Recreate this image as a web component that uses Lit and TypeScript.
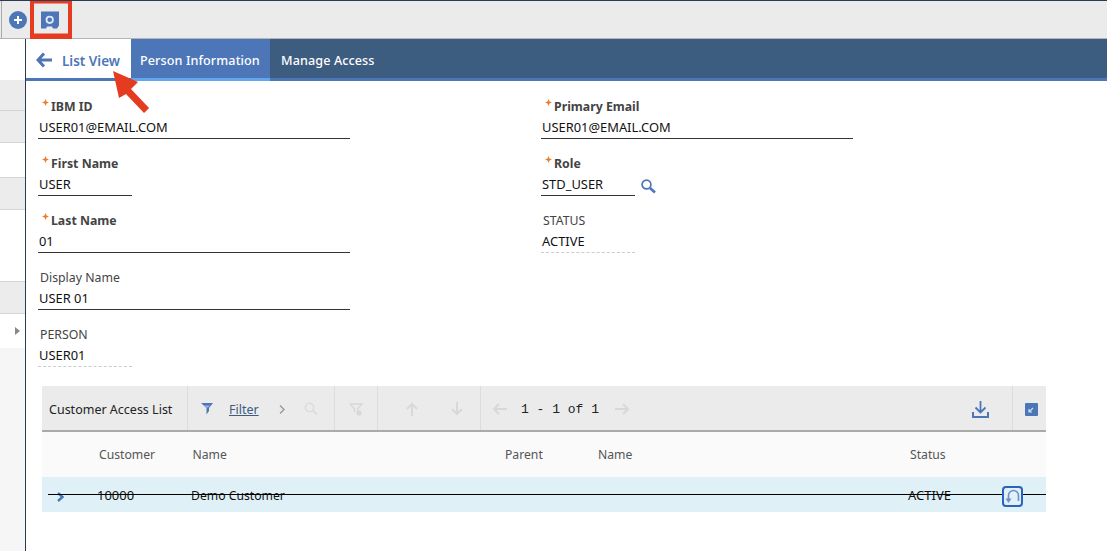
import { LitElement, html, css, svg } from "lit";
import { customElement } from "lit/decorators.js";

const star = svg`<svg class="star" width="7" height="7" viewBox="0 0 7 7"><path d="M3.5 0 L4.5 2.5 L7 3.5 L4.5 4.5 L3.5 7 L2.5 4.5 L0 3.5 L2.5 2.5 Z" fill="#f07a2c"/></svg>`;

@customElement("app-root")
export class AppRoot extends LitElement {
  static styles = css`
    :host { display: block; width: 1107px; height: 551px; position: relative; overflow: hidden; background: #fff;
      font-family: "Noto Sans", "Open Sans", sans-serif; font-size: 13px; color: #111; }
    * { box-sizing: border-box; }
    .top { height: 39px; background: #ebebeb; border-top: 1px solid #2b3a55; border-bottom: 1px solid #b5b5b5; display: flex; align-items: center; }
    .top .sep { width: 1px; height: 37px; background: #a9a9a9; margin-left: 1px; }
    .top .plus { margin-left: 7px; display: block; }
    .top .safe { margin-left: 14px; display: block; }
    .body { display: flex; height: 512px; }
    .rail { width: 26px; flex: none; border-right: 1px solid #2b3a55; display: flex; flex-direction: column; background: #f6f6f6; }
    .rail div { flex: none; }
    .r1 { height: 41px; background: #fff; }
    .g { background: #ececec; border-bottom: 1px solid #d4d4d4; }
    .w { background: #fff; border-bottom: 1px solid #d4d4d4; }
    .h31 { height: 31px; }
    .h32 { height: 32px; }
    .h35 { height: 35px; }
    .h72 { height: 72px; }
    .chev { height: 34px; background: #fff; display: flex; align-items: center; justify-content: flex-end; padding-right: 5px; }
    .chev svg { display: block; }
    .main { flex: 1; display: flex; flex-direction: column; min-width: 0; }
    .tabs { height: 42px; display: flex; background: #3c5c80; border-bottom: 3px solid #4d76b8; color: #fff; font-size: 12.6px; font-weight: 500; letter-spacing: .1px; }
    .tab { display: flex; align-items: center; padding-top: 4px; }
    .tab.list { width: 105px; background: #fff; color: #4d76b8; font-weight: 600; padding-left: 10px; gap: 10px; font-size: 13.5px; letter-spacing: 0; }
    .tab.list svg { margin-top: -2px; }
    .tab.info { width: 139px; background: #4d76b8; padding-left: 9px; box-shadow: 0 3px 0 #62a6ee; }
    .tab.manage { padding-left: 11px; }
    .form { display: grid; grid-template-columns: 503px 312px; padding: 15px 0 0 12px; }
    .col { display: flex; flex-direction: column; }
    .field { height: 57px; display: flex; flex-direction: column; align-items: flex-start; }
    .label { height: 20px; margin-bottom: 1px; font-size: 12.3px; display: flex; align-items: center; color: #444; padding-left: 2px; }
    .label.req { font-weight: 700; padding-left: 4px; }
    .star { margin: 0 2px 7px 0; flex: none; }
    .val { height: 22px; width: 312px; padding-left: 1px; font-size: 12.9px; color: #111; border-bottom: 1px solid #333; line-height: 21px; }
    .val.short { width: 94px; }
    .val.ro { border-bottom: 1px dashed #ccc; }
    .role { display: flex; align-items: flex-start; gap: 6px; }
    .role svg { margin-top: 5px; display: block; }
    .table { width: 1004px; margin: 5px 0 0 16px; position: relative; }
    .bar { height: 46px; background: #ebebeb; border-bottom: 2px solid #aaa; display: flex; align-items: stretch; color: #222; }
    .seg { display: flex; align-items: center; border-right: 1px solid #dcdcdc; flex: none; padding-top: 2px; }
    .seg svg { display: block; flex: none; }
    .s1 { width: 146px; padding-left: 7px; font-size: 12.5px; }
    .s2 { width: 147px; padding-left: 13px; }
    .s2 a { margin-left: 16px; color: #3c5c80; text-decoration: underline; font-size: 12.5px; }
    .s2 .c { margin-left: 20px; }
    .s2 .m { margin-left: 19px; }
    .s3 { width: 43px; justify-content: center; }
    .s4 { width: 103px; padding-left: 27px; gap: 31px; }
    .s5 { flex: 1; padding-left: 12px; font-family: "Liberation Mono", monospace; font-size: 13px; }
    .s5 .txt { margin: 0 16px 0 14px; }
    .s5 .dl { margin-left: auto; margin-right: 23px; }
    .s6 { width: 33px; padding-left: 12px; border-right: none; }
    .head { height: 45px; background: #fafafa; display: flex; align-items: center; font-size: 12.2px; color: #555; }
    .row { height: 35px; background: #dff0f7; display: flex; align-items: center; padding-top: 1px; font-size: 12.2px; color: #111; position: relative; }
    .cell { flex: none; }
    .c-cust { margin-left: 57px; width: 93.5px; }
    .c-name { width: 312.5px; }
    .c-par { width: 93px; }
    .c-name2 { width: 312px; }
    .row .c-id { margin-left: 32px; width: 94px; font-size: 13px; }
    .row .c-dem { width: 717px; }
    .row .c-act { font-size: 13px; }
    .expand { margin-left: 15px; flex: none; margin-top: 4px; }
    .strike { position: absolute; left: 6px; right: 0; top: 17px; height: 1px; background: #000; }
    .act { position: absolute; left: 960px; top: 9px; width: 21px; height: 21px; background: #dff0f7; border: 2px solid #2a62c0; border-radius: 4px; display: flex; align-items: center; justify-content: center; }
    .overlay { position: absolute; left: 0; top: 0; pointer-events: none; }
  `;

  field(label: string, value: string, opts: { req?: boolean; short?: boolean; ro?: boolean } = {}) {
    return html`<div class="field">
      <div class="label ${opts.req ? "req" : ""}">${opts.req ? star : ""}${label}</div>
      <div class="val ${opts.short ? "short" : ""} ${opts.ro ? "ro" : ""}">${value}</div>
    </div>`;
  }

  render() {
    return html`
      <div class="top">
        <div class="sep"></div>
        <svg class="plus" width="18" height="18" viewBox="0 0 18 18"><circle cx="9" cy="9" r="9" fill="#4d76b8"/><path d="M9 5v8M5 9h8" stroke="#fff" stroke-width="2"/></svg>
        <svg class="safe" width="18" height="18" viewBox="0 0 18 18"><path d="M0 .5h18v14l-2 3h-4l-1-2H6l-1 2H0z" fill="#4d76b8"/><circle cx="8.7" cy="8.8" r="3.2" fill="none" stroke="#e4eaf5" stroke-width="1.8"/></svg>
      </div>
      <div class="body">
        <div class="rail">
          <div class="r1"></div>
          <div class="g h31"></div>
          <div class="g h32"></div>
          <div class="w h35"></div>
          <div class="g h32"></div>
          <div class="w h72"></div>
          <div class="g h32"></div>
          <div class="chev"><svg width="5" height="8" viewBox="0 0 5 8"><path d="M0 0l5 4-5 4z" fill="#888"/></svg></div>
        </div>
        <div class="main">
          <div class="tabs">
            <div class="tab list">
              <svg width="16" height="16" viewBox="0 0 16 16"><path d="M8 1.5L2 8l6 6.5M2.5 8H16" fill="none" stroke="#4d76b8" stroke-width="3"/></svg>
              <span>List View</span>
            </div>
            <div class="tab info">Person Information</div>
            <div class="tab manage">Manage Access</div>
          </div>
          <div class="form">
            <div class="col">
              ${this.field("IBM ID", "USER01@EMAIL.COM", { req: true })}
              ${this.field("First Name", "USER", { req: true, short: true })}
              ${this.field("Last Name", "01", { req: true })}
              ${this.field("Display Name", "USER 01")}
              ${this.field("PERSON", "USER01", { short: true, ro: true })}
            </div>
            <div class="col">
              ${this.field("Primary Email", "USER01@EMAIL.COM", { req: true })}
              <div class="field">
                <div class="label req">${star}Role</div>
                <div class="role">
                  <div class="val short">STD_USER</div>
                  <svg width="15" height="15" viewBox="0 0 15 15"><circle cx="5.5" cy="5.5" r="4.4" fill="none" stroke="#4d76b8" stroke-width="1.7"/><path d="M9 9l5 4.5" stroke="#4d76b8" stroke-width="2.6"/></svg>
                </div>
              </div>
              ${this.field("STATUS", "ACTIVE", { short: true, ro: true })}
            </div>
          </div>
          <div class="table">
            <div class="bar">
              <div class="seg s1">Customer Access List</div>
              <div class="seg s2">
                <svg width="12" height="12" viewBox="0 0 12 12"><path d="M0 0h12L8 5v3L5.5 11.5V5L0 0z" fill="#4d76b8"/><path d="M3 2.5h6L7 4.5H5z" fill="#9db6dc"/></svg>
                <a>Filter</a>
                <svg class="c" width="6" height="9" viewBox="0 0 6 9"><path d="M1 .5l4 4-4 4" fill="none" stroke="#999" stroke-width="1.4"/></svg>
                <svg class="m" width="14" height="14" viewBox="0 0 14 14"><circle cx="5.5" cy="5.5" r="4.2" fill="none" stroke="#dcdcdc" stroke-width="1.6"/><path d="M8.5 8.5l4.5 4" stroke="#dcdcdc" stroke-width="2"/></svg>
              </div>
              <div class="seg s3">
                <svg width="14" height="13" viewBox="0 0 14 13"><path d="M1 1h12L8.5 6v3M5.5 9V6L1 1" fill="none" stroke="#d8d8d8" stroke-width="1.4"/><circle cx="10" cy="10" r="2.6" fill="#d8d8d8"/></svg>
              </div>
              <div class="seg s4">
                <svg width="14" height="14" viewBox="0 0 14 14"><path d="M7 14V2M2 7l5-5 5 5" fill="none" stroke="#d8d8d8" stroke-width="2"/></svg>
                <svg width="14" height="14" viewBox="0 0 14 14"><path d="M7 0v12M2 7l5 5 5-5" fill="none" stroke="#d8d8d8" stroke-width="2"/></svg>
              </div>
              <div class="seg s5">
                <svg width="14" height="12" viewBox="0 0 14 12"><path d="M6 1L1 6l5 5M1 6h13" fill="none" stroke="#d8d8d8" stroke-width="2"/></svg>
                <span class="txt">1 - 1 of 1</span>
                <svg width="14" height="12" viewBox="0 0 14 12"><path d="M8 1l5 5-5 5M13 6H0" fill="none" stroke="#d8d8d8" stroke-width="2"/></svg>
                <svg class="dl" width="17" height="17" viewBox="0 0 17 17"><path d="M8.5 0v11M3.5 6.5l5 5 5-5" fill="none" stroke="#4d76b8" stroke-width="1.8"/><path d="M1 11v5h15v-5" fill="none" stroke="#4d76b8" stroke-width="2"/></svg>
              </div>
              <div class="seg s6">
                <svg width="13" height="13" viewBox="0 0 13 13"><rect width="13" height="13" rx="1" fill="#4d76b8"/><path d="M8 5L4 9M4 6v3h3" fill="none" stroke="#cfdcf0" stroke-width="1.2"/></svg>
              </div>
            </div>
            <div class="head">
              <span class="cell c-cust">Customer</span>
              <span class="cell c-name">Name</span>
              <span class="cell c-par">Parent</span>
              <span class="cell c-name2">Name</span>
              <span class="cell">Status</span>
            </div>
            <div class="row">
              <svg class="expand" width="8" height="10" viewBox="0 0 8 10"><path d="M1 1l4.5 4L1 9" fill="none" stroke="#4d76b8" stroke-width="2.4"/></svg>
              <span class="cell c-id">10000</span>
              <span class="cell c-dem">Demo Customer</span>
              <span class="cell c-act">ACTIVE</span>
              <div class="strike"></div>
              <div class="act"><svg width="15" height="15" viewBox="0 0 15 15"><path d="M3.5 10V6.5a5 5 0 0 1 10 0V12" fill="none" stroke="#6f8fc6" stroke-width="1.6"/><path d="M.5 9.5l3 4.5 3-4.5z" fill="#6f8fc6"/></svg></div>
            </div>
          </div>
        </div>
      </div>
      <svg class="overlay" width="1107" height="551" viewBox="0 0 1107 551">
        <path fill-rule="evenodd" d="M30 1H72V39H30ZM34 3.5V33.5H68V3.5Z" fill="#e53b20"/>
        <path d="M113 71L138 82L131 89L149 108L144 113L126 94L119 98Z" fill="#e53b20"/>
      </svg>
    `;
  }
}
